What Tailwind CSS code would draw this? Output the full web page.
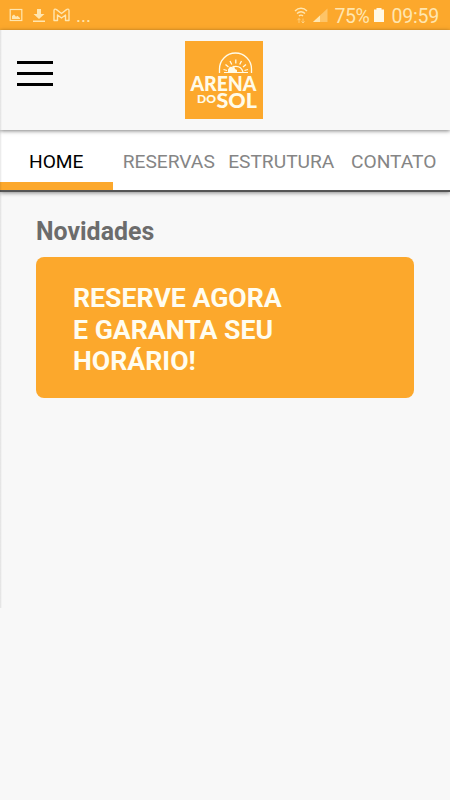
<!DOCTYPE html>
<html lang="pt-BR">
<head>
    <meta charset="UTF-8">
    <meta name="viewport" content="width=device-width, initial-scale=1.0">
    <title>Arena do Sol</title>
    <script src="https://cdn.jsdelivr.net/npm/@tailwindcss/browser@4"></script>
</head>
<body class="bg-[#f8f8f8] font-['Roboto',sans-serif] h-screen overflow-hidden flex flex-col relative">
    <!-- Status bar -->
    <div class="h-[30px] shrink-0 bg-[#fca82c] text-[#ffe6b0] flex items-center justify-between pl-[9px] pr-[11px]">
        <div class="flex items-center">
            <svg class="w-[14px] h-[14px]" viewBox="0 0 14 14" fill="none">
                <rect x="1.2" y="1.5" width="11.6" height="11" stroke="currentColor" stroke-width="1.2"/>
                <path d="M3 11V8l2-1.500 2 2.200 1.500-1L11 10v1z" fill="currentColor"/>
            </svg>
            <svg class="w-[12px] h-[15px] ml-[10px]" viewBox="0 0 12 15" fill="currentColor">
                <path d="M4 1h4v5h3.500L6 11 .5 6H4zM0 12.500h12V14H0z"/>
            </svg>
            <svg class="w-[17px] h-[14px] ml-2" viewBox="0 0 17 14" fill="none" stroke="currentColor" stroke-width="1.400" stroke-linejoin="round">
                <path d="M1 12.500V2.500C1 1 2.500.8 3.500 1.600l5 3.900 5-3.900c1-.8 2.500-.6 2.500.9v10h-3.500V7L8.500 10 4.500 7v5.500z"/>
            </svg>
            <span class="text-[19px] leading-5 ml-[6px] mt-[2px]">...</span>
        </div>
        <div class="flex items-center">
            <svg class="w-[14px] h-[18px]" viewBox="0 0 14 18" fill="none" stroke="currentColor" stroke-width="1.400">
                <path d="M1 5c3.500-3.600 8.500-3.600 12 0M3 7.500c2.300-2.300 5.700-2.300 8 0M5 10c1.200-1.200 2.800-1.200 4 0"/>
                <path d="M5 17v-4.500M3.500 14.200 5 12.500l1.500 1.700M9 12.500V17M7.500 15.300 9 17l1.500-1.700" stroke-width="1" opacity=".55"/>
            </svg>
            <svg class="w-[16px] h-[15px] ml-1" viewBox="0 0 16 15" fill="currentColor">
                <path d="M1 14 15.500.5V14z" opacity=".45"/>
                <path d="M1 14 8 7.500V14z"/>
            </svg>
            <span class="text-[19.500px] leading-6 w-[37px] ml-[6px] mt-[3px] tracking-tight">75%</span>
            <svg class="w-[10px] h-[14px] ml-[3px] text-[#fff8e6]" viewBox="0 0 10 14" fill="currentColor">
                <path d="M2.500 0h5v1.500H10V14H0V1.500h2.500z"/>
            </svg>
            <span class="text-[19.500px] leading-6 ml-[7px] mt-[3px] tracking-[-0.200px]">09:59</span>
        </div>
    </div>

    <!-- Header -->
    <header class="h-[100px] shrink-0 grid grid-cols-3 items-start pl-4 pr-[18px] z-10 bg-[#f8f8f8] shadow-[0_1px_4px_rgba(0,0,0,0.5)]">
        <button class="w-9 ml-px mt-[31px] flex flex-col gap-2" aria-label="Menu">
            <span class="h-[3px] w-full bg-black"></span>
            <span class="h-[3px] w-full bg-black"></span>
            <span class="h-[3px] w-full bg-black"></span>
        </button>
        <svg class="w-[78px] h-[78px] mt-[11px] justify-self-center" viewBox="0 0 78 78">
            <rect width="78" height="78" fill="#fca82c"/>
            <g fill="none" stroke="#fffbe8" stroke-width="1.300">
                <path d="M34.500 32v-4a16 16 0 0 1 32 0v4"/>
                <path d="M39 31.500h24" stroke-width="1"/>
                <path d="M43.500 31a7.500 7.500 0 0 1 14.500 0" stroke-width="1.200"/>
                <path d="M38.500 28.500l3.500 1M40.500 23.500l3 2.500M45 20l1.800 3.500M50.800 18.500v4M56.500 20l-1.800 3.500M61 23.500l-3 2.500M63 28.500l-3.500 1"/>
            </g>
            <path d="M43 31.500v-3l2-3 2 1.500 2-2.500 1 3.500 2 1v2.500z" fill="#fffbe8"/>
            <g fill="#fffbe8" font-family="Lato, sans-serif" font-weight="900">
                <text x="5.5" y="50" font-size="20.500" textLength="66" lengthAdjust="spacingAndGlyphs">ARENA</text>
                <text x="12" y="61.500" font-size="12" textLength="19" lengthAdjust="spacingAndGlyphs">DO</text>
                <text x="31.500" y="67" font-size="20.500" textLength="40.500" lengthAdjust="spacingAndGlyphs">SOL</text>
            </g>
        </svg>
    </header>

    <!-- Tabs -->
    <nav class="h-[62px] shrink-0 grid grid-cols-4 bg-white border-b-2 border-[#555] shadow-[0_1px_4px_rgba(0,0,0,0.45)] text-[19.200px] text-[#858585] text-center">
        <a class="flex items-center justify-center pt-[13px] text-black border-b-8 border-[#fca82c]">HOME</a>
        <a class="flex items-center justify-center pt-[5px]">RESERVAS</a>
        <a class="flex items-center justify-center pt-[5px]">ESTRUTURA</a>
        <a class="flex items-center justify-center pt-[5px]">CONTATO</a>
    </nav>

    <!-- Content -->
    <main class="flex-1 px-9 pt-6">
        <h2 class="text-[24.900px] leading-8 font-bold text-[#6c6c6c]">Novidades</h2>
        <div class="mt-[9px] h-[141px] rounded-lg bg-[#fca82c] px-[37px] pt-[26px] text-[26.700px] leading-[31.500px] font-bold text-[#fffdf0]">
            RESERVE AGORA<br>
            E GARANTA SEU<br>
            HORÁRIO!
        </div>
    </main>

    <!-- Side drawer edge -->
    <div class="absolute left-0 top-[30px] w-[2px] h-[578px] z-20 bg-linear-to-r from-black/10 to-transparent"></div>
</body>
</html>
